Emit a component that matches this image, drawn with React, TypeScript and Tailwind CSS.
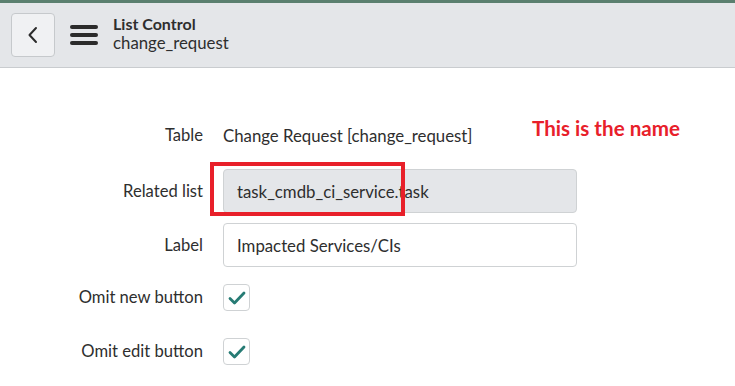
import React from 'react';

const font = { fontFamily: 'Lato, "Open Sans", sans-serif' };

function Check() {
  return (
    <div className="w-[27px] h-[27px] rounded border border-[#cfd2d4] bg-white flex items-center justify-center">
      <svg width="18" height="14" viewBox="0 0 18 14" fill="none">
        <path d="M2 7.5 L6.5 12 L16 2" stroke="#267b74" strokeWidth="2.8" strokeLinecap="round" strokeLinejoin="round" />
      </svg>
    </div>
  );
}

function Row({ label, children, className = '' }: { label: string; children: React.ReactNode; className?: string }) {
  return (
    <div className={`flex items-center ${className}`}>
      <div className="w-[203px] text-right text-[16.6px] text-[#2e2e2e]">{label}</div>
      <div className="ml-[20px] flex-1">{children}</div>
    </div>
  );
}

export default function App() {
  return (
    <div className="w-[735px] h-[386px] bg-white overflow-hidden" style={font}>
      <div className="h-[3px] bg-[#5a7f6f]" />
      <div className="h-[65px] bg-[#e4e6e9] border-b border-[#c9cccf] flex items-center pl-[11px]">
        <button className="w-[44px] h-[44px] rounded-[4px] border border-[#c6c9cc] bg-[#f0f1f3] flex items-center justify-center">
          <svg width="14" height="20" viewBox="0 0 14 20" fill="none">
            <path d="M10 3 L3.5 10 L10 17" stroke="#2b2b2b" strokeWidth="2" strokeLinecap="round" strokeLinejoin="round" />
          </svg>
        </button>
        <div className="ml-[15px] flex flex-col gap-[4px]">
          <span className="block w-[28px] h-[4px] rounded-full bg-[#2b2b2b]" />
          <span className="block w-[28px] h-[4px] rounded-full bg-[#2b2b2b]" />
          <span className="block w-[28px] h-[4px] rounded-full bg-[#2b2b2b]" />
        </div>
        <div className="ml-[15px] leading-[19px] text-[16.8px] text-[#2e2e2e] -mt-[4px]">
          <div className="font-bold text-[16px]">List Control</div>
          <div>change_request</div>
        </div>
      </div>

      <div className="relative pt-[55px]">
        <div className="absolute left-[532px] top-[45px] text-[20.6px] font-bold text-[#e8202a]">This is the name</div>
        <Row label="Table">
          <div className="text-[16.8px] text-[#2e2e2e]">Change Request [change_request]</div>
        </Row>
        <Row label="Related list" className="mt-[21px]">
          <div className="relative w-[354px] h-[44px] rounded-[4px] border border-[#cfd2d4] bg-[#e4e6e9] flex items-center px-[13px] text-[16.8px] text-[#2e2e2e]">
            task_cmdb_ci_service.task
            <div className="absolute left-[-14px] top-[-8px] w-[195px] h-[54px] border-[4px] border-[#e8202a]" />
          </div>
        </Row>
        <Row label="Label" className="mt-[10px]">
          <div className="w-[354px] h-[44px] rounded-[4px] border border-[#cfd2d4] bg-white flex items-center px-[13px] text-[16.8px] text-[#2e2e2e]">
            Impacted Services/CIs
          </div>
        </Row>
        <Row label="Omit new button" className="mt-[17px]">
          <Check />
        </Row>
        <Row label="Omit edit button" className="mt-[27px]">
          <Check />
        </Row>
      </div>
    </div>
  );
}
